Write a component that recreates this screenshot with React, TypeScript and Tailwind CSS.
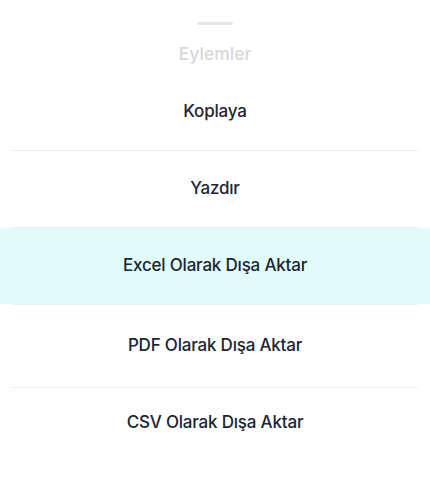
import React from 'react';

const Divider: React.FC = () => <div className="mx-3 h-px bg-[#eceef1]" />;

const Row: React.FC<{ label: string; className?: string }> = ({ label, className = '' }) => (
  <button
    type="button"
    className={`flex w-full items-center justify-center text-[17px] font-medium tracking-[-0.2px] text-[#1c2533] ${className}`}
  >
    {label}
  </button>
);

const App: React.FC = () => {
  return (
    <div className="h-[486px] w-[430px] bg-white font-['Inter',sans-serif]">
      <div className="flex justify-center pt-[22px]">
        <div className="h-[3px] w-9 rounded-full bg-[#e5e7eb]" />
      </div>
      <div className="flex h-[48px] items-center justify-center pt-[10px] text-[17.5px] font-medium text-[#d6d8dc]">
        Eylemler
      </div>

      <Row label="Koplaya" className="h-[77px]" />
      <Divider />
      <Row label="Yazdır" className="h-[76px]" />
      <Divider />
      <Row label="Excel Olarak Dışa Aktar" className="h-[76px] bg-[#e2fcf9]" />
      <Divider />
      <Row label="PDF Olarak Dışa Aktar" className="h-[82px]" />
      <Divider />
      <Row label="CSV Olarak Dışa Aktar" className="h-[70px]" />
    </div>
  );
};

export default App;
